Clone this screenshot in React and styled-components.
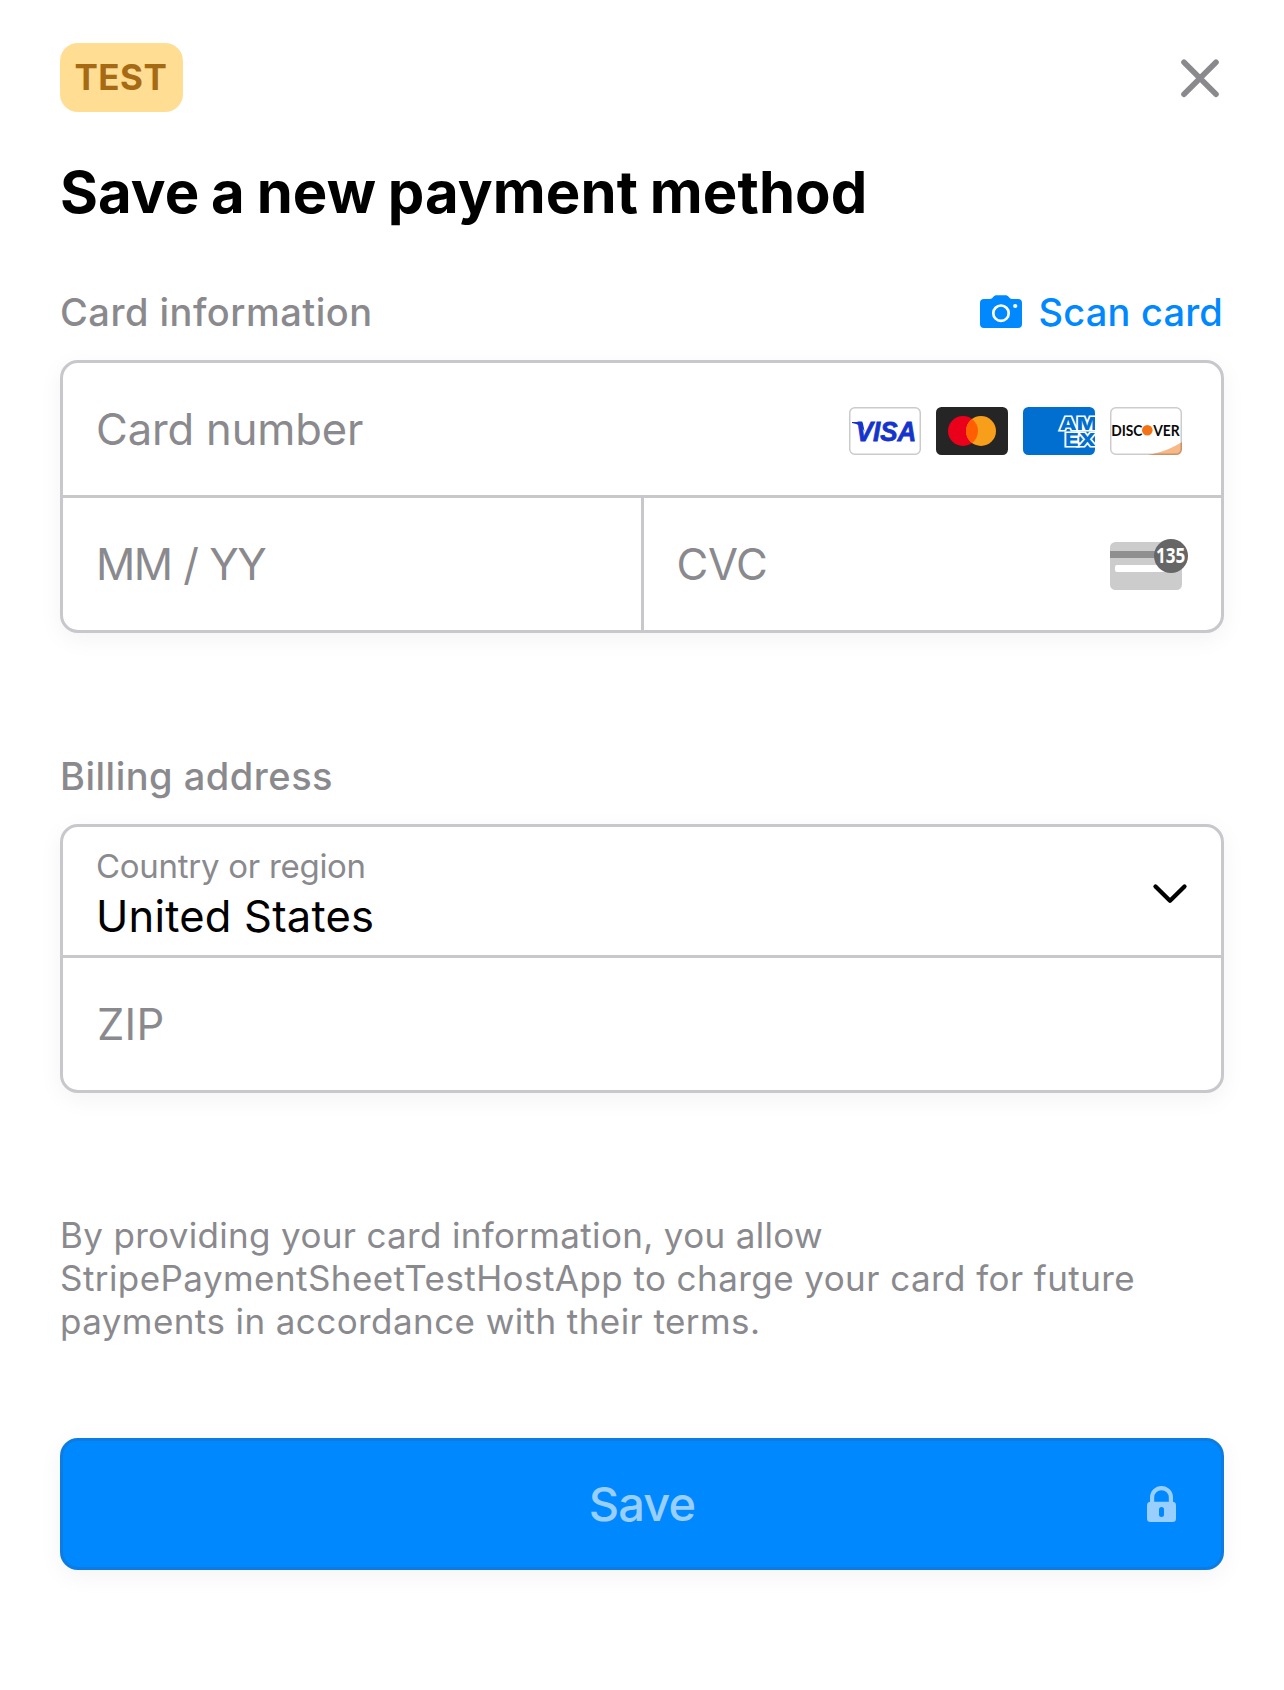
import React from "react";
import styled, { createGlobalStyle } from "styled-components";

const GlobalStyle = createGlobalStyle`
  *, *::before, *::after { box-sizing: border-box; }
  body { margin: 0; background: #fff; }
  svg { display: block; flex: none; }
`;

const line = "#c7c7cc";
const muted = "#8a8a8e";
const blue = "#0088ff";

const Sheet = styled.main`
  display: flex;
  flex-direction: column;
  width: 1284px;
  height: 1690px;
  padding: 43px 60px 0;
  background: #fff;
  color: #000;
  font-family: Inter, "Liberation Sans", sans-serif;
`;

const TopBar = styled.header`
  display: flex;
  align-items: center;
  justify-content: space-between;
  height: 69px;
`;

const TestBadge = styled.span`
  display: flex;
  align-items: center;
  width: 123px;
  height: 69px;
  padding: 0 0 1px 14.5px;
  border-radius: 18px;
  background: #ffdd93;
  color: #a76a14;
  font-size: 35px;
  line-height: 42px;
  font-weight: 700;
  letter-spacing: 0.5px;
`;

const IconButton = styled.button`
  display: flex;
  padding: 0 2px 0 0;
  border: 0;
  background: none;
`;

const Title = styled.h1`
  margin: 44px 0 0;
  font-size: 58px;
  line-height: 72px;
  font-weight: 700;
  letter-spacing: 0.08px;
  word-spacing: -2px;
`;

const SectionHead = styled.div`
  display: flex;
  align-items: center;
  justify-content: space-between;
  height: 44px;
  margin-top: ${(p) => p.$top}px;
`;

const SectionLabel = styled.h2`
  margin: 0;
  color: ${muted};
  font-size: 38px;
  line-height: 44px;
  font-weight: 500;
  letter-spacing: 0.5px;
`;

const ScanButton = styled.button`
  display: flex;
  align-items: center;
  gap: 17px;
  padding: 0 1px 0 0;
  border: 0;
  background: none;
  color: ${blue};
  font: 500 38px/44px Inter, "Liberation Sans", sans-serif;
  letter-spacing: 0.18px;
  & > svg { margin-bottom: 2px; }
`;

const FieldGroup = styled.section`
  display: flex;
  flex-direction: column;
  margin-top: ${(p) => p.$top}px;
  border: 3px solid ${line};
  border-radius: 18px;
  background: #fff;
  box-shadow: 0 6px 24px rgba(0, 0, 0, 0.05);
`;

const FieldRow = styled.div`
  display: flex;
  & + & { border-top: 3px solid ${line}; }
`;

const Field = styled.div`
  display: flex;
  flex: 1;
  align-items: center;
  justify-content: space-between;
  height: ${(p) => p.$height || 132}px;
  padding: ${(p) => p.$drop || 0}px ${(p) => p.$right || 33}px 0 ${(p) => p.$left || 33}px;
  & + & { border-left: 3px solid ${line}; }
`;

const Placeholder = styled.span`
  color: ${muted};
  font-size: 43.5px;
  letter-spacing: ${(p) => p.$spacing}px;
  word-spacing: ${(p) => p.$words || 0}px;
`;

const SelectValue = styled.div`
  display: flex;
  flex-direction: column;
`;

const FloatingLabel = styled.span`
  color: ${muted};
  font-size: 33px;
  line-height: 44px;
  letter-spacing: -0.28px;
`;

const Value = styled.span`
  font-size: 43.5px;
  line-height: 56px;
  letter-spacing: 0.2px;
`;

const Brands = styled.div`
  display: flex;
  gap: 15px;
  padding-top: 4px;
`;

const Legal = styled.p`
  display: flex;
  flex-direction: column;
  margin: 121px 0 0;
  color: ${muted};
  font-size: 35px;
  line-height: 43px;
`;

const LegalLine = styled.span`
  letter-spacing: ${(p) => p.$spacing}px;
  white-space: nowrap;
`;

const SaveButton = styled.button`
  display: grid;
  grid-template-columns: 1fr auto 1fr;
  align-items: center;
  height: 132px;
  margin-top: 95px;
  padding: 0 45px;
  border: 3px solid #0c7ce2;
  border-radius: 18px;
  background: ${blue};
  color: #99cfff;
  box-shadow: 0 6px 24px rgba(0, 0, 0, 0.05);
  font: 500 47px/56px Inter, "Liberation Sans", sans-serif;
  letter-spacing: -0.9px;
  & > svg { justify-self: end; }
`;

const SaveText = styled.span`
  grid-column: 2;
`;

const CloseIcon = () => (
  <svg width="44" height="44" viewBox="0 0 44 44" fill="none" stroke={muted} strokeWidth="5.6" strokeLinecap="round">
    <path d="M6 6.3 38 38.3M38 6.3 6 38.3" />
  </svg>
);

const CameraIcon = () => (
  <svg width="42" height="33" viewBox="0 0 42 33">
    <path
      fill="currentColor"
      d="M4 4h6c1.500 0 2-.5 3-1.700C14.300.7 15 .2 17 .2h8c2 0 2.700.5 4 2.100C30 3.500 30.500 4 32 4h6a4 4 0 0 1 4 4v21a4 4 0 0 1-4 4H4a4 4 0 0 1-4-4V8a4 4 0 0 1 4-4Z"
    />
    <circle cx="21" cy="18.200" r="7.700" fill="none" stroke="#fff" strokeWidth="2.700" />
    <circle cx="35.200" cy="11" r="2.100" fill="#fff" />
  </svg>
);

const Visa = () => (
  <svg width="72" height="48" viewBox="0 0 72 48">
    <rect x=".75" y=".75" width="70.500" height="46.500" rx="5" fill="#fff" stroke="#cbcbcb" strokeWidth="1.500" />
    <path d="M3 15h8.500c1.500 0 2.300.8 2.600 2.200l1.500 7.500C13 19.500 9 17 3 16Z" fill="#1434cb" />
    <text x="6.800" y="34.200" fill="#1434cb" stroke="#1434cb" strokeWidth=".8" fontFamily="'Liberation Sans', sans-serif" fontStyle="italic" fontWeight="700" fontSize="27.500" textLength="60.500" lengthAdjust="spacingAndGlyphs">VISA</text>
  </svg>
);

const Mastercard = () => (
  <svg width="72" height="48" viewBox="0 0 72 48">
    <rect width="72" height="48" rx="5.500" fill="#252525" />
    <circle cx="27" cy="24" r="15" fill="#eb001b" />
    <circle cx="45" cy="24" r="15" fill="#f79e1b" />
    <path d="M36 12a15 15 0 0 1 0 24 15 15 0 0 1 0-24Z" fill="#ff5f00" />
  </svg>
);

const Amex = () => (
  <svg width="72" height="48" viewBox="0 0 72 48">
    <clipPath id="amexCard"><rect width="72" height="48" rx="5.500" /></clipPath>
    <g clipPath="url(#amexCard)">
      <rect width="72" height="48" fill="#016fd0" />
      <g fill="#016fd0" stroke="#fff" strokeWidth="3" paintOrder="stroke" fontFamily="Inter, sans-serif" fontWeight="800" fontSize="18">
        <text x="36.800" y="22.600" textLength="37.500" lengthAdjust="spacingAndGlyphs">AM</text>
        <text x="42" y="38.500" textLength="31" lengthAdjust="spacingAndGlyphs">EX</text>
      </g>
    </g>
  </svg>
);

const Discover = () => (
  <svg width="72" height="48" viewBox="0 0 72 48">
    <clipPath id="discoverCard"><rect width="72" height="48" rx="5.500" /></clipPath>
    <rect width="72" height="48" rx="5.500" fill="#fff" />
    <path d="M38 48c13-2.500 24-6.800 34-13v13Z" fill="#f9b887" clipPath="url(#discoverCard)" />
    <rect x=".75" y=".75" width="70.500" height="46.500" rx="5" fill="none" stroke="#000" strokeOpacity=".2" strokeWidth="1.500" />
    <g fill="#0a0a0a" fontFamily="Lato, sans-serif" fontWeight="700" fontSize="14.300">
      <text x="1.200" y="28.700" textLength="31.300" lengthAdjust="spacingAndGlyphs">DISC</text>
      <text x="43.200" y="28.700" textLength="26.500" lengthAdjust="spacingAndGlyphs">VER</text>
    </g>
    <circle cx="37.300" cy="23.300" r="5.300" fill="#f47216" />
  </svg>
);

const CvcIcon = () => (
  <svg width="78" height="51" viewBox="0 0 78 51">
    <rect y="3" width="72" height="48" rx="5.500" fill="#ccc" />
    <rect y="12" width="60" height="7" fill="#8f8f8f" />
    <rect x="5" y="26" width="56" height="7" rx="2" fill="#fff" />
    <circle cx="61" cy="17" r="17" fill="#666" />
    <text x="46" y="24.300" fill="#fff" fontFamily="'Noto Sans', sans-serif" fontWeight="700" fontSize="20.500" textLength="29.300" lengthAdjust="spacingAndGlyphs">135</text>
  </svg>
);

const ChevronIcon = () => (
  <svg width="36" height="22" viewBox="0 0 36 22" fill="none" stroke="#000" strokeWidth="4.300" strokeLinecap="round" strokeLinejoin="round">
    <path d="M3.500 3.500 18 17.800 32.500 3.500" />
  </svg>
);

const LockIcon = () => (
  <svg width="29" height="36" viewBox="0 0 29 36">
    <path d="M5.100 17V11.500a9.400 9.400 0 0 1 18.800 0V17" fill="none" stroke="currentColor" strokeWidth="4.200" />
    <rect y="15.700" width="29" height="20.300" rx="3.500" fill="currentColor" />
    <rect x="12" y="21" width="5" height="10" rx="2.500" fill={blue} />
  </svg>
);

export default function App() {
  return (
    <Sheet>
      <GlobalStyle />
      <TopBar>
        <TestBadge>TEST</TestBadge>
        <IconButton aria-label="Close"><CloseIcon /></IconButton>
      </TopBar>
      <Title>Save a new payment method</Title>

      <SectionHead $top={62}>
        <SectionLabel>Card information</SectionLabel>
        <ScanButton><CameraIcon />Scan card</ScanButton>
      </SectionHead>
      <FieldGroup $top={26}>
        <FieldRow>
          <Field $right={39}>
            <Placeholder $spacing={-0.13}>Card number</Placeholder>
            <Brands><Visa /><Mastercard /><Amex /><Discover /></Brands>
          </Field>
        </FieldRow>
        <FieldRow>
          <Field><Placeholder $spacing={-1.5} $words={1}>MM / YY</Placeholder></Field>
          <Field><Placeholder $spacing={-0.4}>CVC</Placeholder><CvcIcon /></Field>
        </FieldRow>
      </FieldGroup>

      <SectionHead $top={121}>
        <SectionLabel>Billing address</SectionLabel>
      </SectionHead>
      <FieldGroup $top={26}>
        <FieldRow>
          <Field $height={128} $drop={6}>
            <SelectValue>
              <FloatingLabel>Country or region</FloatingLabel>
              <Value>United States</Value>
            </SelectValue>
            <ChevronIcon />
          </Field>
        </FieldRow>
        <FieldRow>
          <Field $left={34}><Placeholder $spacing={0.2}>ZIP</Placeholder></Field>
        </FieldRow>
      </FieldGroup>

      <Legal>
        <LegalLine $spacing={0.33}>By providing your card information, you allow</LegalLine>
        <LegalLine $spacing={0.43}>StripePaymentSheetTestHostApp to charge your card for future</LegalLine>
        <LegalLine $spacing={0.42}>payments in accordance with their terms.</LegalLine>
      </Legal>

      <SaveButton>
        <SaveText>Save</SaveText>
        <LockIcon />
      </SaveButton>
    </Sheet>
  );
}
